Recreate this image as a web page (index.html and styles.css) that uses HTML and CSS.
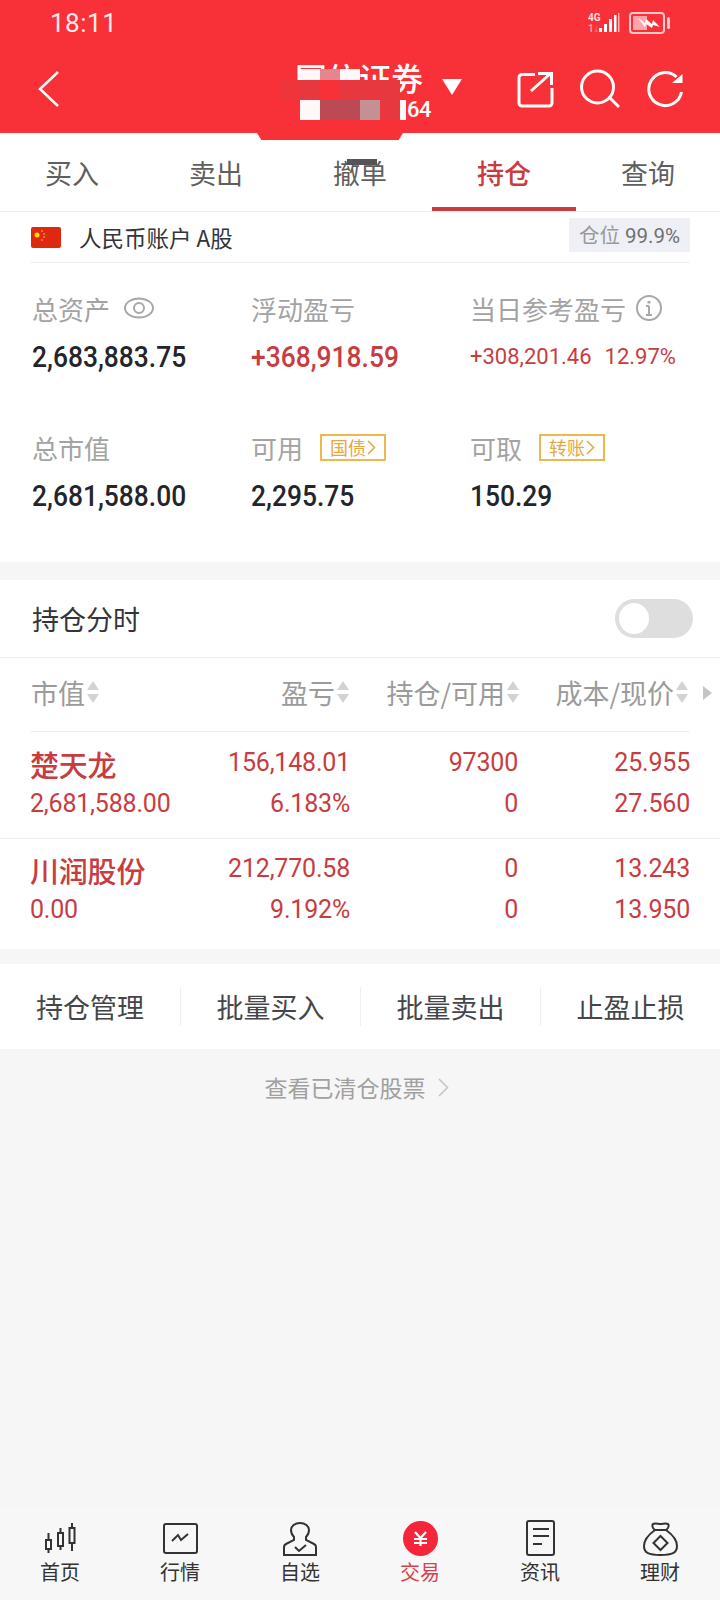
FILE: index.html
```html
<!DOCTYPE html>
<html lang="zh-CN">
  <head>
    <meta charset="UTF-8" />
    <meta name="viewport" content="width=device-width, initial-scale=1.0" />
    <title>持仓</title>
    <link rel="stylesheet" href="styles.css">
  </head>
  <body>
    <header class="top">
      <div class="status">
        <span class="clock">18:11</span>
        <div class="status-icons">
          <svg viewBox="0 0 32 22" width="32" height="22">
            <text x="0" y="9" class="net">4G</text>
            <text x="0" y="20" class="net dim">1↓</text>
            <rect x="11" y="16" width="3" height="4" fill="#fff" />
            <rect x="16" y="12" width="3" height="8" fill="#fff" />
            <rect x="21" y="7" width="3" height="13" fill="#fff" />
            <rect x="26" y="3" width="2.500" height="17" fill="#fff" />
            <rect x="30" y="1" width="1.500" height="19" fill="#ffb3b8" />
          </svg>
          <svg viewBox="0 0 42 22" width="42" height="22">
            <rect x="1" y="1" width="34" height="20" rx="3" fill="none" stroke="#ffc9cc" stroke-width="2" />
            <rect x="4" y="4" width="14" height="14" fill="#ffa5aa" />
            <path d="M9 6l7 5 1-4 6 5 1-4 7 7-7-2-1 3-6-4-1 3z" fill="#fff" />
            <rect x="38" y="5" width="3" height="12" rx="1.5" fill="#ffc9cc" />
          </svg>
        </div>
      </div>
      <div class="navbar">
        <svg class="back" viewBox="0 0 24 40" width="24" height="40">
          <path d="M22 3L4 20l18 17" fill="none" stroke="#fff" stroke-width="2.500" />
        </svg>
        <div class="broker">
          <div class="broker-name">国信证券</div>
          <div class="broker-no">64</div>
          <div class="mosaic">
            <i class="m1"></i><i class="m2"></i><i class="m1"></i><i></i><i></i><i></i>
            <i class="m3"></i><i class="m6"></i><i class="m3"></i><i class="m3"></i><i class="m3"></i><i></i>
            <i class="m1"></i><i class="m4"></i><i class="m4"></i><i class="m5"></i><i class="m3"></i><i class="m1"></i>
          </div>
          <span class="caret"></span>
        </div>
        <div class="nav-icons">
          <svg viewBox="0 0 38 38" width="38" height="38" fill="none" stroke="#fff" stroke-width="3">
            <path d="M19 4.500H6a3 3 0 0 0-3 3V33a3 3 0 0 0 3 3h27a3 3 0 0 0 3-3V18" />
            <path d="M15 21L35 3M22 3.500h13.500V15" />
          </svg>
          <svg viewBox="0 0 40 40" width="40" height="40" fill="none" stroke="#fff" stroke-width="3">
            <circle cx="17.500" cy="18" r="16" />
            <path d="M30 29l9 9" />
          </svg>
          <svg viewBox="0 0 38 38" width="38" height="38" fill="none" stroke="#fff" stroke-width="3">
            <path d="M30.500 7A16.500 16.500 0 1 0 35.500 22" />
            <path d="M36.500 4v9H26z" fill="#fff" stroke="none" />
          </svg>
        </div>
      </div>
    </header>
    <div class="notch"></div>

    <nav class="tabs">
      <div class="tab">买入</div>
      <div class="tab">卖出</div>
      <div class="tab tab-mark">撤单</div>
      <div class="tab active">持仓</div>
      <div class="tab">查询</div>
    </nav>

    <section class="account">
      <div class="account-row">
        <svg class="flag" viewBox="0 0 30 21" width="30" height="21">
          <rect width="30" height="21" rx="2" fill="#de2910" />
          <circle cx="6" cy="8" r="2.500" fill="#ffde00" />
          <circle cx="11" cy="4" r="0.800" fill="#ffde00" />
          <circle cx="13" cy="7" r="0.800" fill="#ffde00" />
          <circle cx="13" cy="10" r="0.800" fill="#ffde00" />
          <circle cx="11" cy="13" r="0.800" fill="#ffde00" />
        </svg>
        <span class="account-name">人民币账户 A股</span>
        <span class="ratio"><em>仓位</em> 99.9%</span>
      </div>
      <div class="stats">
        <div class="stat">
          <div class="stat-label">总资产
            <svg viewBox="0 0 30 22" width="30" height="22" fill="none" stroke="#a8a8a8" stroke-width="2">
              <ellipse cx="15" cy="11" rx="14" ry="9.500" />
              <circle cx="15" cy="11" r="5" />
            </svg>
          </div>
          <div class="stat-value">2,683,883.75</div>
        </div>
        <div class="stat">
          <div class="stat-label">浮动盈亏</div>
          <div class="stat-value red strong">+368,918.59</div>
        </div>
        <div class="stat">
          <div class="stat-label">当日参考盈亏
            <svg class="info" viewBox="0 0 26 26" width="26" height="26" fill="none" stroke="#a8a8a8" stroke-width="2">
              <circle cx="13" cy="13" r="12" />
              <path d="M13 11v9M10 11h3M10 20h6" />
              <path d="M13 6v2.500" stroke-width="3" />
            </svg>
          </div>
          <div class="stat-value red small"><span>+308,201.46</span><span>12.97%</span></div>
        </div>
        <div class="stat">
          <div class="stat-label">总市值</div>
          <div class="stat-value">2,681,588.00</div>
        </div>
        <div class="stat">
          <div class="stat-label">可用 <span class="tag">国债<svg viewBox="0 0 9 15" width="9" height="15"><path d="M1 1l6.500 6.500L1 14" fill="none" stroke="#e8a73c" stroke-width="1.500" /></svg></span></div>
          <div class="stat-value">2,295.75</div>
        </div>
        <div class="stat">
          <div class="stat-label">可取 <span class="tag">转账<svg viewBox="0 0 9 15" width="9" height="15"><path d="M1 1l6.500 6.500L1 14" fill="none" stroke="#e8a73c" stroke-width="1.500" /></svg></span></div>
          <div class="stat-value">150.29</div>
        </div>
      </div>
    </section>

    <section class="holdings">
      <div class="switch-row">
        <span>持仓分时</span>
        <span class="switch"><span class="knob"></span></span>
      </div>
      <div class="table-head">
        <div class="col-a">市值<span class="sort"></span></div>
        <div class="col-b">盈亏<span class="sort"></span></div>
        <div class="col-c">持仓/可用<span class="sort"></span></div>
        <div class="col-d">成本/现价<span class="sort"></span></div>
        <span class="more"></span>
      </div>
      <div class="stock">
        <div class="col-a"><div class="stock-name">楚天龙</div><div>2,681,588.00</div></div>
        <div class="col-b"><div>156,148.01</div><div>6.183%</div></div>
        <div class="col-c"><div>97300</div><div>0</div></div>
        <div class="col-d"><div>25.955</div><div>27.560</div></div>
      </div>
      <div class="stock">
        <div class="col-a"><div class="stock-name">川润股份</div><div>0.00</div></div>
        <div class="col-b"><div>212,770.58</div><div>9.192%</div></div>
        <div class="col-c"><div>0</div><div>0</div></div>
        <div class="col-d"><div>13.243</div><div>13.950</div></div>
      </div>
    </section>

    <section class="actions">
      <div>持仓管理</div>
      <div>批量买入</div>
      <div>批量卖出</div>
      <div>止盈止损</div>
    </section>

    <div class="cleared">查看已清仓股票<svg viewBox="0 0 11 19" width="11" height="19"><path d="M1 1l8.500 8.500L1 18" fill="none" stroke="#c4c4c4" stroke-width="1.500" /></svg></div>

    <footer class="bottom">
      <div class="item">
        <svg viewBox="0 0 36 36" width="36" height="36" fill="none" stroke="#333" stroke-width="2">
          <rect x="4" y="20" width="5" height="9" /><path d="M6.500 13v7M6.500 29v4" />
          <rect x="16" y="13" width="5" height="13" /><path d="M18.500 8v5M18.500 26v4" />
          <rect x="27.500" y="8" width="5" height="15" /><path d="M30 3v5M30 23v8" />
        </svg>
        首页
      </div>
      <div class="item">
        <svg viewBox="0 0 36 36" width="36" height="36" fill="none" stroke="#333" stroke-width="2">
          <rect x="2" y="4" width="33" height="29" rx="2" />
          <path d="M10 21l6-6 3 5 7-6" />
        </svg>
        行情
      </div>
      <div class="item">
        <svg viewBox="0 0 36 36" width="36" height="36" fill="none" stroke="#333" stroke-width="2">
          <path d="M2 35V27q0-2 2-3l8-4v-3C10 15 9 13 9 10c0-4 4-7 9-7s9 3 9 7c0 3-1 5-3 7v3l8 4q2 1 2 3v8z" />
          <path d="M13 27l4 4 7-6" />
        </svg>
        自选
      </div>
      <div class="item on">
        <svg viewBox="0 0 36 36" width="36" height="36">
          <circle cx="18.500" cy="18.500" r="17.500" fill="#f5263a" />
          <path d="M13 12l5.500 6 5.500-6M12 19h13M12 23h13M18.500 18v8" fill="none" stroke="#fff" stroke-width="2.200" />
        </svg>
        交易
      </div>
      <div class="item">
        <svg viewBox="0 0 36 36" width="36" height="36" fill="none" stroke="#333" stroke-width="2">
          <rect x="5" y="1" width="27" height="34" rx="2" />
          <path d="M11 9h16M11 16h16M11 24h9" />
        </svg>
        资讯
      </div>
      <div class="item">
        <svg viewBox="0 0 36 36" width="36" height="36" fill="none" stroke="#333" stroke-width="2">
          <path d="M13 10C6 15 2 21 2 26c0 7 5 9 16.500 9S35 33 35 26c0-5-4-11-11-16z" />
          <path d="M13 10c-3-2-3-5-2-6 2-1 5 0 7.500 0s5-1 7.500 0c1 1 1 4-2 6z" />
          <path d="M18.500 16l7 7-7 7-7-7z" />
        </svg>
        理财
      </div>
    </footer>
  </body>
</html>
```

FILE: styles.css
```css
:root {
  --red: #f83038;
  --down: #c83c3f;
  --muted: #a3a3a3;
  --line: #efefef;
  --text: #23252b;
}
* {
  box-sizing: border-box;
}
html,
body {
  overflow-x: hidden;
}
body {
  margin: 0;
  height: 1600px;
  display: flex;
  flex-direction: column;
  background: #f6f6f6;
  color: var(--text);
  font-family: "Noto Sans CJK SC", "Noto Sans", sans-serif;
}

.top {
  height: 133px;
  background: var(--red);
  color: #fff;
  flex: none;
}

.status {
  height: 46px;
  padding: 0 49px 0 50px;
  display: flex;
  align-items: center;
  justify-content: space-between;
}

.clock {
  font-family: "Roboto", sans-serif;
  font-size: 26px;
  letter-spacing: 0.5px;
  color: #ffe9ea;
}

.status-icons {
  display: flex;
  align-items: center;
  gap: 9px;
}

.net {
  font-family: "Roboto", sans-serif;
  font-size: 10px;
  font-weight: 700;
  fill: #ffe0e2;
}

.net.dim {
  fill: #ffa5aa;
}

.navbar {
  height: 87px;
  display: flex;
  align-items: center;
  padding: 0 36px 0 36px;
  position: relative;
}

.back {
  margin-top: -1px;
}

.broker {
  position: absolute;
  left: 280px;
  top: 13px;
  width: 190px;
  height: 70px;
}

.broker-name {
  margin-left: 15px;
  font-size: 32px;
  font-weight: 500;
  line-height: 36px;
  white-space: nowrap;
}

.broker-no {
  margin-left: 127px;
  font-family: "Roboto", sans-serif;
  font-size: 22px;
  font-weight: 500;
  letter-spacing: -0.5px;
  line-height: 30px;
}

.mosaic {
  position: absolute;
  left: 20px;
  top: 10px;
  display: grid;
  grid-template-columns: repeat(5, 20px) 6px;
  grid-template-rows: 11px 20px 20px;
}

.mosaic::before {
  content: "";
  position: absolute;
  left: -20px;
  top: 11px;
  width: 20px;
  height: 20px;
  background: #ee353c;
}

.mosaic .m1 {
  background: #fff8fb;
}

.mosaic .m2 {
  background: #e5858d;
}

.mosaic .m3 {
  background: #e8383f;
}

.mosaic .m4 {
  background: #bb4a54;
}

.mosaic .m5 {
  background: #c49094;
}

.mosaic .m6 {
  background: var(--red);
}

.caret {
  position: absolute;
  left: 162px;
  top: 20px;
  border-left: 10px solid transparent;
  border-right: 10px solid transparent;
  border-top: 16px solid #fff;
}

.nav-icons {
  margin-left: auto;
  display: flex;
  align-items: center;
  gap: 26px;
  margin-top: -2px;
}

.notch {
  width: 146px;
  height: 7px;
  margin: 0 auto 0 257px;
  background: var(--red);
  clip-path: polygon(0 0, 100% 0, 97% 100%, 3% 100%);
  flex: none;
  position: relative;
  z-index: 1;
}

.tabs {
  height: 79px;
  margin-top: -7px;
  display: flex;
  background: #fff;
  border-bottom: 1px solid var(--line);
  flex: none;
}

.tab {
  flex: 0 0 144px;
  display: flex;
  align-items: center;
  justify-content: center;
  font-size: 27px;
  color: #5f5f5f;
}

.tab.active {
  color: var(--down);
  font-weight: 500;
  border-bottom: 4px solid var(--down);
  padding-top: 4px;
}

.tab-mark {
  position: relative;
}

.tab-mark::before {
  content: "";
  position: absolute;
  left: 59px;
  top: 26px;
  width: 30px;
  height: 6px;
  background: #555;
}

.account {
  height: 350px;
  padding: 7px 30px 0;
  background: #fff;
  flex: none;
}

.account-row {
  height: 44px;
  display: flex;
  align-items: center;
  border-bottom: 1px solid var(--line);
  padding-bottom: 7px;
}

.flag {
  margin-left: 1px;
}

.account-name {
  margin-left: 18px;
  font-size: 22.500px;
  color: #33353a;
}

.ratio {
  margin-left: auto;
  width: 121px;
  height: 34px;
  margin-top: -5px;
  padding-top: 1px;
  text-align: center;
  background: #eff0f6;
  font-family: "Roboto", "Noto Sans CJK SC", sans-serif;
  font-size: 20.500px;
  color: #707070;
}

.ratio em {
  font-style: normal;
  color: #999;
}

.stats {
  display: grid;
  grid-template-columns: 219px 219px 1fr;
  grid-auto-rows: 139px;
  padding: 25px 0 0 2px;
}

.stat-label {
  height: 40px;
  display: flex;
  align-items: center;
  gap: 14px;
  font-size: 26px;
  color: var(--muted);
  white-space: nowrap;
}

.stat-label .info {
  margin-left: -4px;
}

.stat-value {
  margin-top: 10px;
  font-family: "Roboto", sans-serif;
  font-size: 29.500px;
  line-height: 38px;
  font-weight: 500;
  white-space: nowrap;
  transform: scaleX(0.895);
  transform-origin: left;
}

.stat-value.red {
  color: var(--down);
}

.stat-value.small {
  font-size: 22px;
  display: flex;
  gap: 13px;
  font-weight: 400;
  transform: none;
}

.tag {
  display: inline-flex;
  align-items: center;
  justify-content: center;
  gap: 1px;
  width: 66px;
  height: 27px;
  border: 2px solid #efb84f;
  color: #e8a73c;
  font-size: 18px;
  margin-left: 3px;
}

.holdings {
  margin-top: 18px;
  background: #fff;
  flex: none;
}

.switch-row {
  height: 78px;
  padding: 0 27px 0 32px;
  display: flex;
  align-items: center;
  justify-content: space-between;
  border-bottom: 1px solid var(--line);
  font-size: 27px;
  color: #33353a;
}

.switch {
  width: 78px;
  height: 39px;
  border-radius: 20px;
  background: #dedede;
  padding: 4px;
}

.knob {
  display: block;
  width: 30px;
  height: 31px;
  border-radius: 50%;
  background: #fff;
}

.table-head,
.stock {
  margin: 0 30px;
  display: grid;
  grid-template-columns: 150px 170px 168px 1fr;
  position: relative;
}

.table-head {
  height: 74px;
  padding-bottom: 5px;
  align-items: center;
  border-bottom: 1px solid var(--line);
  font-size: 27px;
  color: #9b9b9b;
}

.table-head .col-b,
.table-head .col-c,
.table-head .col-d {
  display: flex;
  justify-content: flex-end;
  align-items: center;
  white-space: nowrap;
}

.table-head .col-a {
  display: flex;
  align-items: center;
  margin-left: 1px;
}

.table-head .col-c {
  margin-right: -2px;
}

.table-head .col-d {
  margin-right: 1px;
}

.sort {
  width: 13px;
  height: 22px;
  margin-left: 2px;
  position: relative;
  flex: none;
}

.sort::before,
.sort::after {
  content: "";
  position: absolute;
  left: 0;
  border-left: 6.500px solid transparent;
  border-right: 6.500px solid transparent;
}

.sort::before {
  top: 0;
  border-bottom: 9px solid #d3d3d3;
}

.sort::after {
  bottom: 0;
  border-top: 9px solid #d3d3d3;
}

.more {
  position: absolute;
  right: -22px;
  top: 28px;
  border-top: 7px solid transparent;
  border-bottom: 7px solid transparent;
  border-left: 9px solid #c4c4c4;
}

.stock {
  height: 106px;
  padding-top: 10px;
  font-family: "Roboto", "Noto Sans CJK SC", sans-serif;
  font-size: 25px;
  line-height: 41px;
  color: var(--down);
  text-align: right;
  letter-spacing: -0.2px;
}

.stock + .stock {
  margin: 0;
  padding: 9px 30px 0;
  border-top: 1px solid var(--line);
  height: 111px;
}

.stock .col-a {
  text-align: left;
  white-space: nowrap;
}

.stock-name {
  font-family: "Noto Sans CJK SC", sans-serif;
  font-size: 29px;
  font-weight: 500;
  padding-top: 2px;
  margin-bottom: -2px;
}

.actions {
  margin-top: 15px;
  height: 85px;
  display: grid;
  grid-template-columns: repeat(4, 180px);
  align-items: center;
  background: #fff;
  font-size: 27px;
  color: #44464a;
  text-align: center;
  flex: none;
}

.actions div + div {
  border-left: 1px solid var(--line);
}

.cleared {
  margin-top: 21px;
  padding-right: 7px;
  display: flex;
  align-items: center;
  justify-content: center;
  gap: 12px;
  font-size: 23px;
  color: #a0a0a0;
  flex: none;
}

.bottom {
  margin-top: auto;
  height: 92px;
  display: grid;
  grid-template-columns: repeat(6, 120px);
  background: #f7f7f7;
  flex: none;
}

.item {
  display: flex;
  flex-direction: column;
  align-items: center;
  gap: 4px;
  font-size: 20px;
  line-height: 24px;
  color: #333;
  padding-top: 12px;
}

.item.on {
  color: #d9414a;
}
```
